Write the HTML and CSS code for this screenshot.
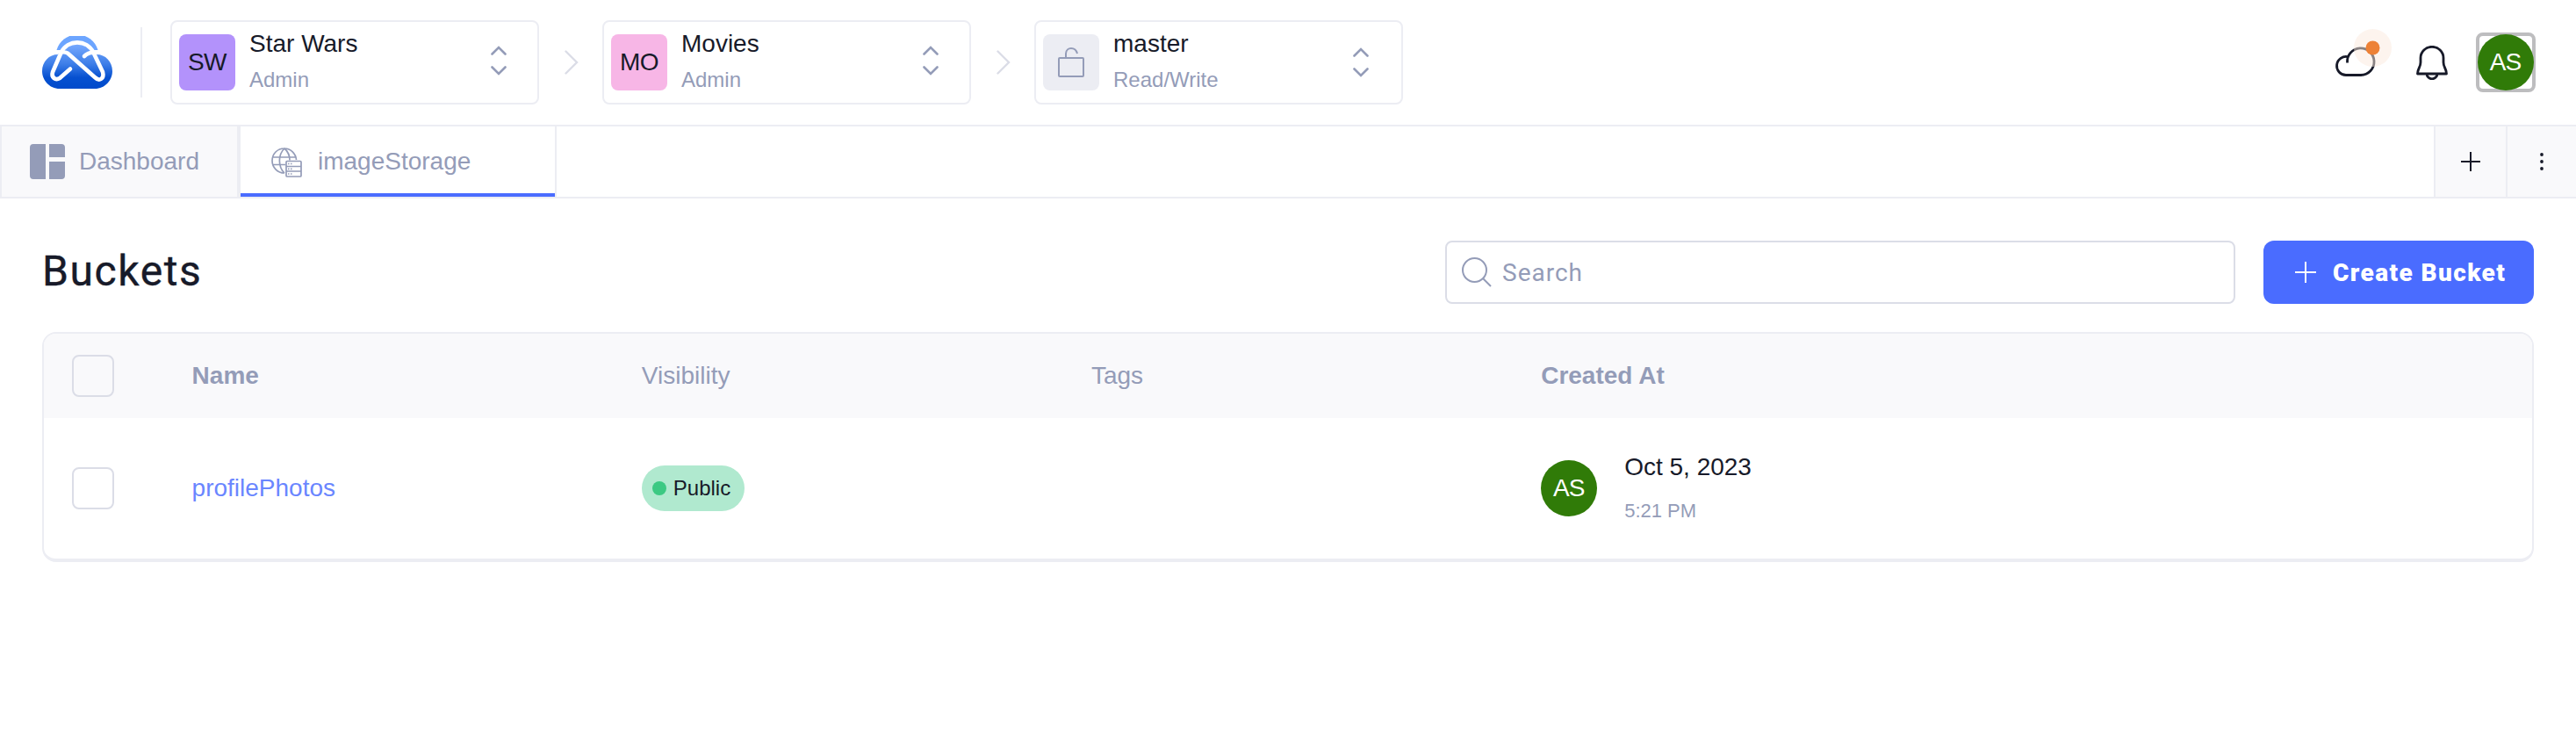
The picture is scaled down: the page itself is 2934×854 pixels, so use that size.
FILE: index.html
```html
<!DOCTYPE html>
<html lang="en">
<head>
<meta charset="utf-8">
<title>Buckets</title>
<link rel="stylesheet" href="styles.css">
</head>
<body>
<header class="header">
  <svg class="logo" viewBox="0 0 80 60">
    <defs>
      <linearGradient id="cloud" x1="0" y1="0" x2="0" y2="1"><stop offset="0" stop-color="#78aaff"/><stop offset=".45" stop-color="#3d7ee8"/><stop offset=".75" stop-color="#0650d0"/><stop offset="1" stop-color="#004bcb"/></linearGradient>
    </defs>
    <path d="M16.500 16 A24.500 24.500 0 0 1 63.500 16 Z" fill="#6ca5ff"/>
    <path d="M20 60 C8 60 0 50 0 40 C0 29 8 21 18 21 C21 14 29 9 40 9 C51 9 59 14 62 21 C72 21 80 29 80 40 C80 50 72 60 60 60 Z" fill="url(#cloud)"/>
    <path d="M14 18 H22 M58 18 H66" stroke="#fff" stroke-width="4" fill="none"/>
    <path d="M32 37.500 L20 48 C15 51 10 47 12 41 L21.500 19 C29 3.500 51 3.500 58.500 19 L69 41 C71 49 65 52 60 47 L29 19.500 C26 18 23 18 21 19 M48 23 C51 20 55 18 61 19" fill="none" stroke="#fff" stroke-width="4.600" stroke-linecap="round" stroke-linejoin="round"/>
  </svg>
  <div class="divider"></div>
  <nav class="crumbs">
    <div class="select">
      <span class="tile tile-purple">SW</span>
      <span class="labels"><span class="name">Star Wars</span><span class="role">Admin</span></span>
      <svg class="updown" viewBox="0 0 18 34"><path d="M1.500 9.500 L9 2 L16.500 9.500 M1.500 24.500 L9 32 L16.500 24.500"/></svg>
    </div>
    <svg class="next" viewBox="0 0 16 28"><path d="M1.500 1.500 L14 14 L1.500 26.500"/></svg>
    <div class="select">
      <span class="tile tile-pink">MO</span>
      <span class="labels"><span class="name">Movies</span><span class="role">Admin</span></span>
      <svg class="updown" viewBox="0 0 18 34"><path d="M1.500 9.500 L9 2 L16.500 9.500 M1.500 24.500 L9 32 L16.500 24.500"/></svg>
    </div>
    <svg class="next" viewBox="0 0 16 28"><path d="M1.500 1.500 L14 14 L1.500 26.500"/></svg>
    <div class="select branch">
      <span class="tile tile-gray"><svg class="lock" viewBox="0 0 30 34"><rect x="1" y="12" width="28" height="21" rx="1"/><path d="M9 12 V7 C9.500 -1 20 -1 22 7"/></svg></span>
      <span class="labels"><span class="name">master</span><span class="role">Read/Write</span></span>
      <svg class="updown low" viewBox="0 0 18 34"><path d="M1.500 9.500 L9 2 L16.500 9.500 M1.500 24.500 L9 32 L16.500 24.500"/></svg>
    </div>
  </nav>
  <div class="actions">
    <svg class="cloud" viewBox="0 0 64 54">
      <path d="M13.500 38.500 A15.300 15.300 0 1 1 29 52.500 H12 A10.500 10.500 0 1 1 14.500 31.800"/>
      <circle class="halo" cx="42.500" cy="21.500" r="21.500"/><circle class="dot" cx="42.500" cy="21.500" r="8"/>
    </svg>
    <svg class="bell" viewBox="0 0 36 39"><path d="M5 14 A13 12.700 0 0 1 31 14 V19 C31 25 34.500 26 34.500 32 H1.500 C1.500 26 5 25 5 19 Z M12 32 A6 5.800 0 0 0 24 32"/></svg>
    <div class="user"><span class="avatar">AS</span></div>
  </div>
</header>
<div class="tabs">
  <div class="tab dash">
    <svg class="dashicon" viewBox="0 0 40 40"><path d="M4 0 H18 V40 H4 Q0 40 0 36 V4 Q0 0 4 0 Z M22 0 H36 Q40 0 40 4 V15 H22 Z M22 20 H40 V36 Q40 40 36 40 H22 Z"/></svg>
    <span>Dashboard</span>
  </div>
  <div class="tab active">
    <svg class="globe" viewBox="0 0 35 34"><path d="M15 29 C7 29 1 22.500 1 15 C1 7 7 1 15 1 C22 1 28 7 28.500 14 M15 29 C7.500 22 7.500 8 15 1 C19 4.500 21 9 21 14.500 M2 11 H28 M2 19.500 H16"/><rect x="17" y="15.500" width="17" height="17.500" rx="1"/><path d="M17 21.500 H34 M17 27 H34"/><path stroke-dasharray="1.500 1.500" d="M19 18.500 H24 M19 24.300 H24 M19 30 H24"/></svg>
    <span>imageStorage</span>
  </div>
  <div class="tab square"><svg class="plus" viewBox="0 0 22 22"><path d="M11 0 V22 M0 11 H22"/></svg></div>
  <div class="tab square last"><svg class="dots" viewBox="0 0 4 20"><circle cx="2" cy="2" r="1.900"/><circle cx="2" cy="10" r="1.900"/><circle cx="2" cy="18" r="1.900"/></svg></div>
</div>
<main class="main">
  <div class="toolbar">
    <h1 class="title">Buckets</h1>
    <div class="search">
      <svg class="lens" viewBox="0 0 34 34"><circle cx="14.500" cy="14.500" r="13.500"/><path d="M24 24 L33 33"/></svg>
      <span>Search</span>
    </div>
    <div class="create"><svg class="plus light" viewBox="0 0 24 24"><path d="M12 0 V24 M0 12 H24"/></svg><span>Create Bucket</span></div>
  </div>
  <section class="table">
    <div class="row head">
      <span class="check"></span><b>Name</b><span>Visibility</span><span>Tags</span><b>Created At</b>
    </div>
    <div class="row body">
      <span class="check"></span>
      <span class="link">profilePhotos</span>
      <span><span class="badge"><i class="bullet"></i><span>Public</span></span></span>
      <span></span>
      <div class="created"><span class="avatar">AS</span><span class="when"><span class="date">Oct 5, 2023</span><span class="time">5:21 PM</span></span></div>
    </div>
  </section>
</main>
</body>
</html>
```
FILE: styles.css
```css
* { box-sizing: border-box; }
body { margin: 0; background: #fff; color: #171a29; font-family: "Liberation Sans", Arial, sans-serif; font-size: 28px; }
svg { display: block; flex: none; fill: none; }
span, b { white-space: nowrap; }

.header { height: 144px; border-bottom: 2px solid #ecedf3; display: flex; align-items: center; padding: 0 46px 0 48px; }
.logo { width: 80px; height: 60px; }
.divider { width: 2px; height: 80px; margin: 0 32px; background: #ecedf3; }
.crumbs { display: flex; align-items: center; }
.select { width: 420px; height: 96px; border: 2px solid #ecedf3; border-radius: 8px; display: flex; align-items: center; padding: 0 35px 0 8px; }
.branch { padding-right: 37px; }
.tile { width: 64px; height: 64px; border-radius: 8px; display: flex; align-items: center; justify-content: center; letter-spacing: -.5px; }
.tile-purple { background: #b392fb; }
.tile-pink { background: #f7b6e6; }
.tile-gray { background: #ecedf3; }
.lock { width: 30px; height: 34px; stroke: #949cb8; stroke-width: 2; }
.labels { margin-left: 16px; flex: 1; display: flex; flex-direction: column; gap: 3px; padding-bottom: 3px; }
.name { line-height: 40px; }
.role { font-size: 24px; line-height: 36px; color: #949cb8; }
.updown { width: 18px; height: 34px; stroke: #949cb8; stroke-width: 2.600; stroke-linecap: round; margin-top: -4px; }
.low { margin-top: 0; }
.next { width: 16px; height: 28px; margin: 0 27px 0 29px; stroke: #dbdde7; stroke-width: 2.400; stroke-linecap: round; }
.actions { margin-left: auto; display: flex; align-items: center; }
.cloud { width: 64px; height: 54px; margin-bottom: 22px; stroke: #171a29; stroke-width: 2.800; overflow: visible; }
.halo { fill: #fceade; fill-opacity: .5; stroke: none; }
.dot { fill: #ed8136; stroke: none; }
.bell { width: 36px; height: 39px; margin-left: 28px; stroke: #171a29; stroke-width: 2.800; stroke-linejoin: round; }
.user { width: 68px; height: 68px; margin-left: 32px; border: 4px solid #bdbdbf; border-radius: 8px; display: flex; align-items: center; justify-content: center; }
.avatar { width: 64px; height: 64px; flex: none; border-radius: 50%; background: #307b08; color: #fff; display: flex; align-items: center; justify-content: center; letter-spacing: -1px; padding-right: 1px; }

.tabs { height: 82px; border-bottom: 2px solid #ecedf3; border-left: 2px solid #ecedf3; display: flex; color: #949cb8; }
.tab { display: flex; align-items: center; }
.dash { width: 272px; background: #f9f9fb; border-right: 4px solid #ecedf3; padding-left: 32px; gap: 16px; }
.dashicon { width: 40px; height: 40px; fill: #949cb8; }
.active { width: 360px; border-right: 2px solid #ecedf3; padding-left: 35px; gap: 18px; box-shadow: inset 0 -4px #4a6cff; }
.globe { width: 35px; height: 34px; margin-top: 2px; stroke: #949cb8; stroke-width: 1.700; }
.square { width: 82px; background: #f9f9fb; border-left: 2px solid #ecedf3; justify-content: center; margin-left: auto; }
.last { margin-left: 0; width: 80px; }
.plus { width: 22px; height: 22px; stroke: #171a29; stroke-width: 2; }
.dots { width: 4px; height: 20px; fill: #171a29; }

.main { padding: 48px; }
.toolbar { height: 72px; display: flex; align-items: center; }
.title { margin: 0 0 2px; flex: 1; font: 400 48px/70px Roboto, sans-serif; letter-spacing: 1.600px; -webkit-text-stroke: .4px #171a29; }
.search { width: 900px; height: 72px; border: 2px solid #dbdde7; border-radius: 8px; display: flex; align-items: center; padding-left: 17px; gap: 12px; color: #949cb8; font-family: Roboto, sans-serif; letter-spacing: 1px; }
.lens { width: 34px; height: 34px; stroke: #949cb8; stroke-width: 2; }
.create { width: 308px; height: 72px; margin-left: 32px; border-radius: 12px; background: #4a6cff; color: #fff; display: flex; align-items: center; padding-left: 36px; gap: 19px; font: 900 28px Roboto, sans-serif; letter-spacing: 1.400px; }
.light { width: 24px; height: 24px; stroke: #fff; }

.table { margin-top: 32px; border: 2px solid #ecedf3; border-bottom-width: 4px; border-radius: 16px; overflow: hidden; }
.row { display: grid; grid-template-columns: 136.600px repeat(3, 512.200px) 1fr; align-items: center; padding-left: 32px; }
.head { height: 96px; background: #f9f9fb; color: #949cb8; }
.body { height: 160px; }
.check { width: 48px; height: 48px; border: 2px solid #dbdde7; border-radius: 8px; }
.link { color: #6a86ff; }
.badge { display: inline-flex; vertical-align: middle; align-items: center; height: 52px; width: 117px; border-radius: 26px; background: #b0e9cf; padding-left: 12px; gap: 8px; font-size: 24px; }
.bullet { width: 16px; height: 16px; border-radius: 50%; background: #3cc983; }
.created { display: flex; align-items: center; }
.when { display: flex; flex-direction: column; margin-left: 31px; gap: 14px; padding-bottom: 2px; }
.date { line-height: 40px; }
.time { font-size: 22px; line-height: 32px; color: #949cb8; }
```
